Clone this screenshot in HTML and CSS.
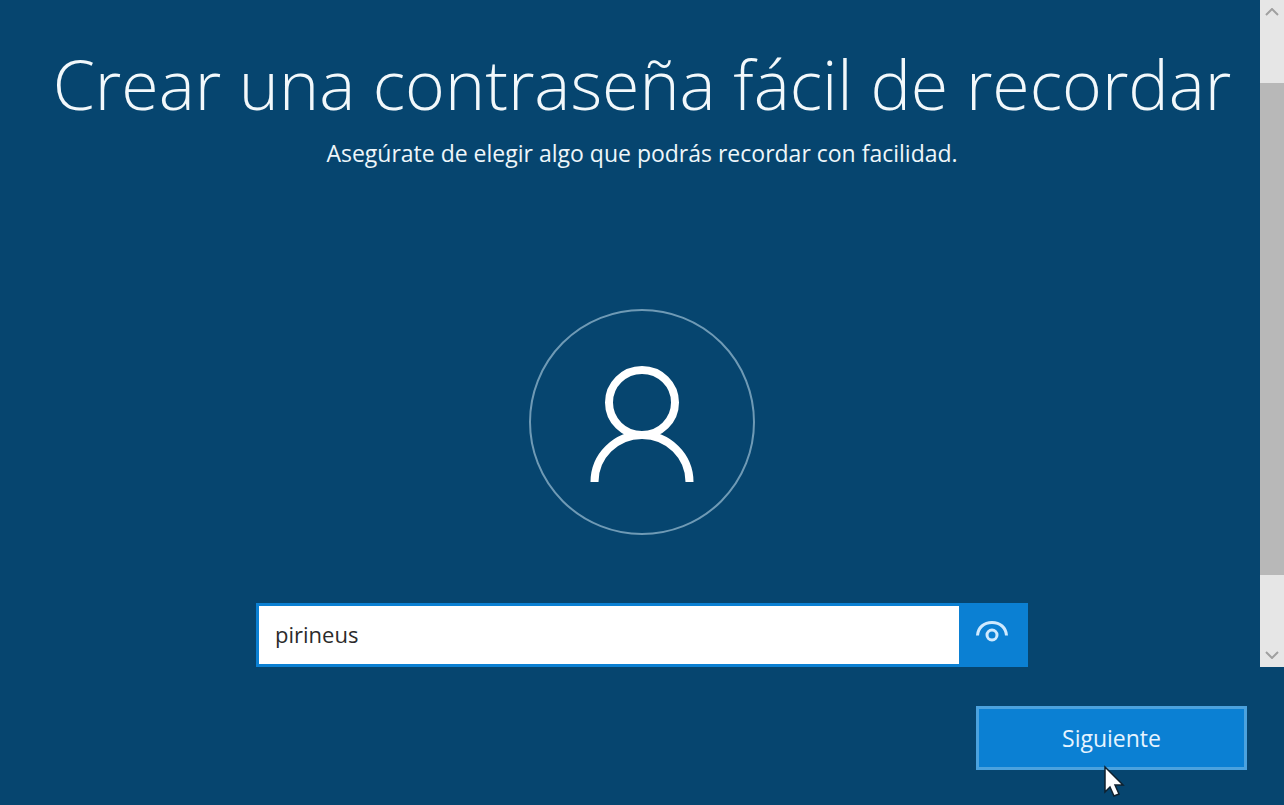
FILE: index.html
```html
<!DOCTYPE html>
<html lang="es">
<head>
    <meta charset="UTF-8">
    <meta name="viewport" content="width=device-width, initial-scale=1.0">
    <title>Crear una contraseña</title>
    <link rel="stylesheet" href="styles.css">
</head>
<body>
    <form class="setup">
        <div class="scroll-area">
            <main class="content">
                <h1>Crear una contraseña fácil de recordar</h1>
                <p class="subtitle" id="hint">Asegúrate de elegir algo que podrás recordar con facilidad.</p>

                <div class="avatar">
                    <svg width="104" height="116" viewBox="0 0 104 116" fill="none" stroke="#fff" stroke-width="8">
                        <ellipse cx="52" cy="36.500" rx="33" ry="32.500"/>
                        <path d="M4.500 116A47.500 47 0 0 1 99.500 116"/>
                    </svg>
                </div>

                <div class="password-row">
                    <input type="text" class="password" value="pirineus" aria-label="Contraseña" aria-describedby="hint">
                    <button type="button" class="reveal" aria-label="Mostrar contraseña">
                        <svg width="34" height="24" viewBox="0 0 34 24" fill="none" stroke="#cfeaff" stroke-width="3">
                            <path d="M2.500 16.500C3 8.500 9 3.500 17 3.500S31 8.500 31.500 16.500"/>
                            <circle cx="17" cy="16" r="5"/>
                        </svg>
                    </button>
                </div>
            </main>

            <div class="scrollbar">
                <button type="button" class="arrow" aria-label="Subir">
                    <svg width="14" height="8" viewBox="0 0 14 8" fill="none" stroke="#a0a0a0" stroke-width="2">
                        <path d="M1 7l6-6 6 6"/>
                    </svg>
                </button>
                <div class="track">
                    <div class="thumb"></div>
                </div>
                <button type="button" class="arrow" aria-label="Bajar">
                    <svg width="14" height="8" viewBox="0 0 14 8" fill="none" stroke="#a0a0a0" stroke-width="2">
                        <path d="M1 1l6 6 6-6"/>
                    </svg>
                </button>
            </div>
        </div>

        <footer class="actions">
            <button type="button" class="next">Siguiente
                <svg class="pointer" width="22" height="32" viewBox="0 0 22 32">
                    <path d="M2 2v25l5-5 4 9 5-2-4-9h8z" fill="#fff" stroke="#10212e" stroke-width="1.500"/>
                </svg>
            </button>
        </footer>
    </form>
</body>
</html>
```

FILE: styles.css
```css
* {
    box-sizing: border-box;
    margin: 0;
    padding: 0;
}

body {
    background: #06456f;
    color: #fff;
    font-family: 'Open Sans', 'Noto Sans', sans-serif;
    font-size: 23px;
}

button, input {
    font: inherit;
    border: none;
    border-radius: 0;
}

.setup {
    min-height: 100vh;
    display: flex;
    flex-direction: column;
}

.scroll-area {
    flex: 1;
    display: flex;
}

.content {
    flex: 1;
    min-width: 0;
    padding: 36px 0 0 24px;
    display: flex;
    flex-direction: column;
    align-items: center;
    text-align: center;
}

h1 {
    font-size: 68px;
    font-weight: 300;
    line-height: 96px;
    color: #f2f8fb;
}

.subtitle {
    margin-top: 3px;
    line-height: 36px;
    color: #eef6fa;
}

.avatar {
    width: 226px;
    height: 226px;
    margin-top: 138px;
    padding-top: 4px;
    border: 2px solid #6f9ab5;
    border-radius: 50%;
    display: flex;
    align-items: center;
    justify-content: center;
}

.password-row {
    width: 100%;
    max-width: 772px;
    height: 64px;
    margin-top: 68px;
    display: flex;
    border: 3px solid #0b80d3;
    background: #0b80d3;
}

.password {
    flex: 1;
    min-width: 0;
    padding: 0 16px 2px;
    background: #fff;
    color: #2b2b2b;
    font-size: 22px;
    outline: none;
}

.reveal {
    width: 66px;
    padding-bottom: 8px;
    background: #0b80d3;
    display: flex;
    align-items: center;
    justify-content: center;
}

.scrollbar {
    width: 24px;
    background: #e6e6e6;
    display: flex;
    flex-direction: column;
}

.arrow {
    height: 24px;
    background: none;
    display: flex;
    align-items: center;
    justify-content: center;
}

.track {
    flex: 1;
    display: grid;
    grid-template-rows: 59fr 492fr 68fr;
}

.thumb {
    grid-row: 2;
    background: #b8b8b8;
}

.actions {
    padding: 39px 37px 35px;
    display: flex;
    justify-content: flex-end;
}

.next {
    position: relative;
    width: 271px;
    height: 64px;
    background: #0b80d3;
    border: 3px solid #4ba2de;
    color: #e6f4ff;
}

/* mouse pointer over the lower edge of the button */
.pointer {
    position: absolute;
    left: 124px;
    top: 56px;
}
```
